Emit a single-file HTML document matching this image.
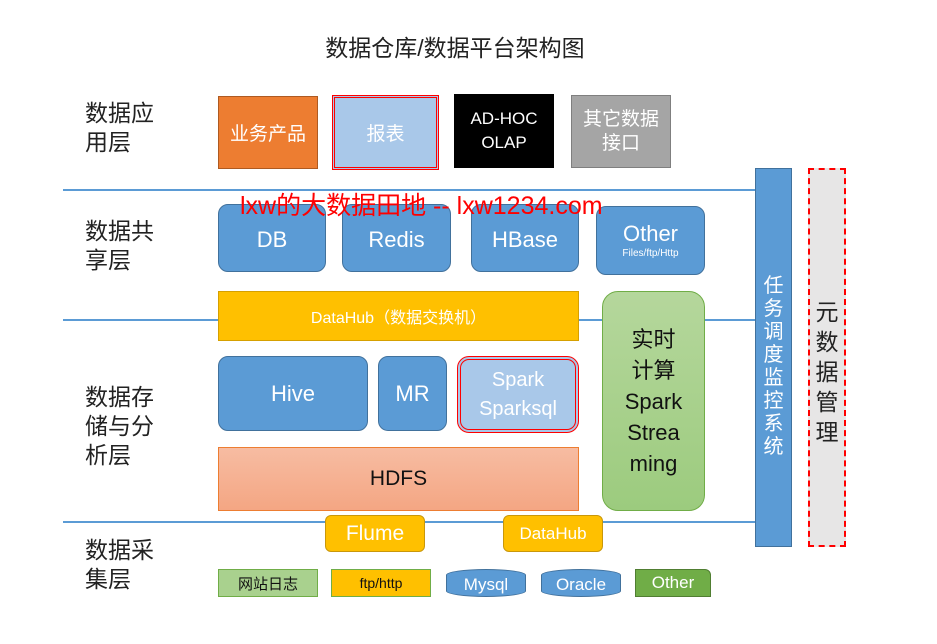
<!DOCTYPE html>
<html><head><meta charset="utf-8"><style>
body{margin:0;width:937px;height:644px;background:#fff;position:relative;overflow:hidden;font-family:"Liberation Sans","Noto Sans CJK SC",sans-serif}
div{position:absolute;box-sizing:border-box;display:flex;align-items:center;justify-content:center;text-align:center}
.ln{height:2px;background:#5b9bd5;display:block}
.lab{font-size:23px;color:#222;line-height:29px;text-align:left;justify-content:flex-start;display:block}
.b{background:#5b9bd5;border:1.5px solid #41719c;border-radius:10px;color:#fff;font-size:22px}
.y{background:#ffc000;border:1.5px solid #c9970a;border-radius:6px;color:#fff}
</style></head><body>
<div style="left:0;top:29px;width:910px;font-size:23px;color:#222">数据仓库/数据平台架构图</div>
<div class="ln" style="left:63px;top:189px;width:692px"></div>
<div class="ln" style="left:63px;top:319px;width:692px"></div>
<div class="ln" style="left:63px;top:521px;width:692px"></div>
<div class="lab" style="left:85px;top:99px">数据应<br>用层</div>
<div class="lab" style="left:85px;top:217px">数据共<br>享层</div>
<div class="lab" style="left:85px;top:383px">数据存<br>储与分<br>析层</div>
<div class="lab" style="left:85px;top:536px">数据采<br>集层</div>

<div style="left:218px;top:96px;width:100px;height:73px;background:#ed7d31;border:1.5px solid #ae5a21;color:#fff;font-size:19px">业务产品</div>
<div style="left:332px;top:95px;width:107px;height:75px;background:#a9c8e9;border:3px double #f00;color:#fff;font-size:19px">报表</div>
<div style="left:454px;top:94px;width:100px;height:74px;background:#000;color:#fff;font-size:17px;line-height:24px">AD-HOC<br>OLAP</div>
<div style="left:571px;top:95px;width:100px;height:73px;background:#a5a5a5;border:1px solid #7f7f7f;color:#fff;font-size:19px;line-height:24px">其它数据<br>接口</div>

<div class="b" style="left:218px;top:204px;width:108px;height:68px;padding-top:4px">DB</div>
<div class="b" style="left:342px;top:204px;width:109px;height:68px;padding-top:4px">Redis</div>
<div class="b" style="left:471px;top:204px;width:108px;height:68px;padding-top:4px">HBase</div>
<div class="b" style="left:596px;top:206px;width:109px;height:69px;flex-direction:column;line-height:26px">Other<span style="font-size:10px;line-height:14px">Files/ftp/Http</span></div>
<div style="left:240px;top:186px;font-size:25px;color:#f00;white-space:nowrap;display:block">lxw的大数据田地 -- lxw1234.com</div>

<div style="left:218px;top:291px;width:361px;height:50px;background:#ffc000;border:1.5px solid #d6a000;color:#fff;font-size:16px">DataHub（数据交换机）</div>
<div style="left:602px;top:291px;width:103px;height:220px;background:linear-gradient(#b5d79c,#9ccb7e);border:1.5px solid #70ad47;border-radius:16px;color:#111;font-size:22px;line-height:31px">实时<br>计算<br>Spark<br>Strea<br>ming</div>
<div class="b" style="left:218px;top:356px;width:150px;height:75px">Hive</div>
<div class="b" style="left:378px;top:356px;width:69px;height:75px">MR</div>
<div style="left:457px;top:356px;width:122px;height:77px;background:#a9c8e9;border:4px double #f00;border-radius:12px;color:#fff;font-size:20px;line-height:29px">Spark<br>Sparksql</div>
<div style="left:218px;top:447px;width:361px;height:64px;background:linear-gradient(#f7bca2,#f4a683);border:1.5px solid #ed7d31;color:#111;font-size:21px">HDFS</div>

<div class="y" style="left:325px;top:515px;width:100px;height:37px;font-size:21px">Flume</div>
<div class="y" style="left:503px;top:515px;width:100px;height:37px;font-size:17px">DataHub</div>

<div style="left:218px;top:569px;width:100px;height:28px;background:#a9d18e;border:1px solid #70ad47;color:#111;font-size:15px">网站日志</div>
<div style="left:331px;top:569px;width:100px;height:28px;background:#ffc000;border:1px solid #70ad47;color:#111;font-size:14px">ftp/http</div>
<div style="left:446px;top:569px;width:80px;height:28px;background:#5b9bd5;border:1px solid #41719c;border-radius:40px/6px;color:#fff;font-size:17px;padding-top:3px">Mysql</div>
<div style="left:541px;top:569px;width:80px;height:28px;background:#5b9bd5;border:1px solid #41719c;border-radius:40px/6px;color:#fff;font-size:17px;padding-top:3px">Oracle</div>
<div style="left:635px;top:569px;width:76px;height:28px;background:#70ad47;border:1px solid #507e32;border-top-right-radius:6px;color:#fff;font-size:17px">Other</div>

<div style="left:755px;top:168px;width:37px;height:379px;background:#5b9bd5;border:1px solid #41719c;color:#fff;font-size:20px;line-height:23px;align-items:flex-start;padding-top:106px">任<br>务<br>调<br>度<br>监<br>控<br>系<br>统</div>
<div style="left:808px;top:168px;width:38px;height:379px;background:#e7e6e6;border:2px dashed #f00;color:#222;font-size:23px;line-height:30px;align-items:flex-start;padding-top:127px">元<br>数<br>据<br>管<br>理</div>
</body></html>
